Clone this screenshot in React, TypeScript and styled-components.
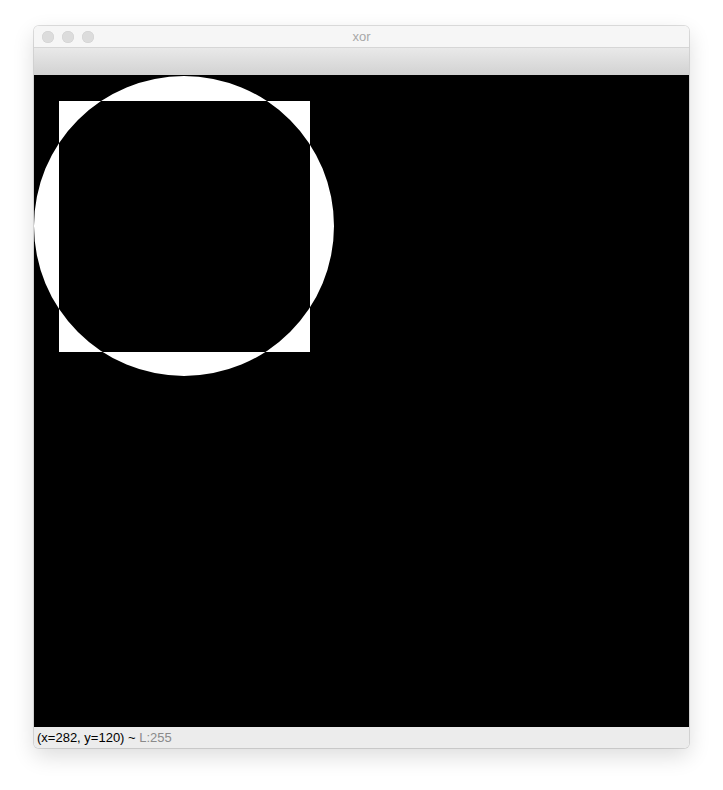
import React from 'react';
import styled, { createGlobalStyle } from 'styled-components';

const GlobalStyle = createGlobalStyle`
  html, body {
    margin: 0;
    padding: 0;
    background: #ffffff;
    font-family: "Liberation Sans", Arial, sans-serif;
  }
`;

const Page = styled.div`
  width: 723px;
  height: 790px;
  padding: 26px 0 0 34px;
  box-sizing: border-box;
`;

const Window = styled.div`
  width: 655px;
  display: flex;
  flex-direction: column;
  border-radius: 5px;
  overflow: hidden;
  box-shadow: 0 0 0 1px rgba(0, 0, 0, 0.12), 0 8px 22px rgba(0, 0, 0, 0.14);
`;

const TitleBar = styled.div`
  position: relative;
  height: 21px;
  display: flex;
  align-items: center;
  justify-content: center;
  background: #f6f6f6;
  border-bottom: 1px solid #d6d6d6;
`;

const Lights = styled.div`
  position: absolute;
  left: 8px;
  top: 5px;
  display: flex;
  gap: 8px;
`;

const Light = styled.span`
  width: 12px;
  height: 12px;
  border-radius: 50%;
  background: #dcdcdc;
  box-shadow: inset 0 0 0 0.5px #d0d0d0;
`;

const Title = styled.span`
  font-size: 13px;
  color: #a8a8a8;
`;

const Toolbar = styled.div`
  height: 27px;
  background: linear-gradient(#e9e9e9, #d2d2d2);
`;

const Canvas = styled.svg`
  display: block;
  width: 655px;
  height: 652px;
  background: #000000;
`;

const StatusBar = styled.div`
  height: 21px;
  display: flex;
  align-items: center;
  padding-left: 3px;
  background: #ececec;
  font-size: 13px;
  color: #000000;
  white-space: pre;
`;

const Dim = styled.span`
  color: #8a8a8a;
`;

export default function App() {
  // circle xor square, evenodd leaves overlap black
  const xorPath =
    'M0 151 A150 150 0 1 0 300 151 A150 150 0 1 0 0 151 Z M25 26 H276 V277 H25 Z';

  return (
    <>
      <GlobalStyle />
      <Page>
        <Window>
          <TitleBar>
            <Lights>
              <Light />
              <Light />
              <Light />
            </Lights>
            <Title>xor</Title>
          </TitleBar>
          <Toolbar />
          <Canvas viewBox="0 0 655 652">
            <path d={xorPath} fill="#ffffff" fillRule="evenodd" />
          </Canvas>
          <StatusBar>
            (x=282, y=120) ~ <Dim>L:255</Dim>
          </StatusBar>
        </Window>
      </Page>
    </>
  );
}
